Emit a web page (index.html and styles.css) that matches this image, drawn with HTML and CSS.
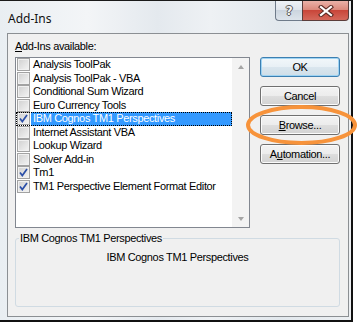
FILE: index.html
```html
<!DOCTYPE html>
<html>
<head>
<meta charset="utf-8">
<link rel="stylesheet" href="styles.css">
</head>
<body>
<div class="window">
  <div class="titlebar">
    <span class="title">Add-Ins</span>
    <div class="caption-buttons">
      <div class="cap help">?</div>
      <div class="cap close">
        <svg width="16" height="12" viewBox="0 0 16 12"><path d="M3 2 L13 10 M13 2 L3 10" stroke="#5a2a24" stroke-width="4.2" stroke-linecap="square"/><path d="M3 2 L13 10 M13 2 L3 10" stroke="#ffffff" stroke-width="2.2" stroke-linecap="square"/></svg>
      </div>
    </div>
  </div>
  <div class="client">
    <div class="label"><u>A</u>dd-Ins available:</div>
    <div class="listbox">
      <ul class="items">
        <li class="item"><span class="cb"></span><span class="txt">Analysis ToolPak</span></li>
        <li class="item"><span class="cb"></span><span class="txt">Analysis ToolPak - VBA</span></li>
        <li class="item"><span class="cb"></span><span class="txt">Conditional Sum Wizard</span></li>
        <li class="item"><span class="cb"></span><span class="txt">Euro Currency Tools</span></li>
        <li class="item selected"><span class="cb checked"><svg width="11" height="11" viewBox="0 0 11 11"><path d="M2 5.5 L4.3 8.5 L9 2" stroke="#2b4fa8" stroke-width="1.7" fill="none"/></svg></span><span class="txt">IBM Cognos TM1 Perspectives</span></li>
        <li class="item"><span class="cb"></span><span class="txt">Internet Assistant VBA</span></li>
        <li class="item"><span class="cb"></span><span class="txt">Lookup Wizard</span></li>
        <li class="item"><span class="cb"></span><span class="txt">Solver Add-in</span></li>
        <li class="item"><span class="cb checked"><svg width="11" height="11" viewBox="0 0 11 11"><path d="M2 5.5 L4.3 8.5 L9 2" stroke="#2b4fa8" stroke-width="1.7" fill="none"/></svg></span><span class="txt">Tm1</span></li>
        <li class="item"><span class="cb checked"><svg width="11" height="11" viewBox="0 0 11 11"><path d="M2 5.5 L4.3 8.5 L9 2" stroke="#2b4fa8" stroke-width="1.7" fill="none"/></svg></span><span class="txt">TM1 Perspective Element Format Editor</span></li>
      </ul>
      <div class="scrollbar">
        <span class="arrowbox"><span class="arrow up"></span></span>
        <span class="arrowbox"><span class="arrow down"></span></span>
      </div>
    </div>
    <div class="buttons">
      <div class="btn default">OK</div>
      <div class="btn">Cancel</div>
      <div class="btn"><u>B</u>rowse...</div>
      <div class="btn">A<u>u</u>tomation...</div>
    </div>
    <fieldset class="group">
      <legend>IBM Cognos TM1 Perspectives</legend>
      <p class="desc">IBM Cognos TM1 Perspectives</p>
    </fieldset>
  </div>
</div>
<svg class="mark" width="121" height="50" viewBox="0 0 121 50"><ellipse cx="61.5" cy="25" rx="53.5" ry="18" fill="none" stroke="#f7933b" stroke-width="4"/></svg>
</body>
</html>
```
FILE: styles.css
```css
html, body {
  margin: 0;
  padding: 0;
  background: #ffffff;
}
body {
  font-family: "Liberation Sans", Arial, sans-serif;
  font-size: 11px;
  letter-spacing: -0.35px;
  color: #000;
  position: relative;
  width: 361px;
  height: 330px;
  overflow: hidden;
}
.window {
  box-sizing: border-box;
  width: 353px;
  height: 322px;
  border-top: 1px solid #1a1a1a;
  border-right: 2px solid #111;
  border-bottom: 2px solid #111;
  background: linear-gradient(90deg, #e9eef2 0%, #f3f5f7 25%, #e4e9ee 45%, #eef1f4 60%, #e2e8ed 80%, #eceff2 100%);
}
.titlebar {
  height: 32px;
  display: flex;
  justify-content: space-between;
  align-items: flex-start;
}
.title {
  font-family: "Noto Sans", "Open Sans", sans-serif;
  font-size: 12px;
  letter-spacing: 0;
  line-height: 16px;
  padding: 10px 0 0 8px;
  color: #111;
}
.caption-buttons {
  display: flex;
  margin-right: 2px;
}
.cap {
  box-sizing: border-box;
  height: 20px;
  display: flex;
  align-items: center;
  justify-content: center;
}
.help {
  width: 27px;
  border: 1px solid #6f7b8a;
  border-top: none;
  border-right: none;
  border-radius: 0 0 0 4px;
  background: linear-gradient(#eef2f6 0%, #dfe5ec 45%, #ccd5df 50%, #dde4eb 100%);
  font-family: "DejaVu Sans", sans-serif;
  font-weight: bold;
  font-size: 12px;
  color: #f4f4f4;
  text-shadow: -1px 0 #555, 1px 0 #555, 0 -1px #555, 0 1px #555;
}
.close {
  width: 47px;
  border: 1px solid #5b3d3b;
  border-top: none;
  border-radius: 0 0 4px 0;
  background: linear-gradient(#eab1a8 0%, #dc8a7d 45%, #c9463a 50%, #d4685b 100%);
}
.client {
  box-sizing: border-box;
  margin-left: 7px;
  width: 342px;
  height: 284px;
  border: 1px solid #8b8f93;
  background: #f0f0f0;
  display: grid;
  grid-template-columns: 235px 80px;
  grid-template-rows: 13px 171px auto;
  column-gap: 10px;
  row-gap: 4px;
  padding: 6px 8px 0 7px;
}
.label {
  line-height: 13px;
  grid-column: 1;
}
.listbox {
  grid-column: 1;
  grid-row: 2;
  box-sizing: border-box;
  border: 1px solid #828790;
  background: #fff;
  display: flex;
}
.items {
  list-style: none;
  margin: 0;
  padding: 0;
  flex: 1;
}
.item {
  height: 13.5px;
  display: flex;
  align-items: center;
}
.cb {
  box-sizing: border-box;
  width: 13px;
  height: 13px;
  margin-left: 1px;
  border: 1px solid #a2a2a2;
  background: linear-gradient(135deg, #cfcfcf 0%, #e2e2e2 50%, #f4f4f4 100%);
  box-shadow: inset 0 0 0 1px #f0f0f0;
  display: flex;
  align-items: center;
  justify-content: center;
  flex: none;
}
.txt {
  flex: 1;
  margin-left: 1px;
  padding-left: 2px;
  height: 13.5px;
  line-height: 13.5px;
  white-space: nowrap;
}
.selected {
  outline: 1px dotted #000;
  outline-offset: -1px;
}
.selected .txt {
  background: #3399ff;
  color: #fff;
}
.scrollbar {
  width: 17px;
  background: #f3f3f3;
  display: flex;
  flex-direction: column;
  justify-content: space-between;
}
.arrowbox {
  height: 17px;
  display: flex;
  align-items: center;
  justify-content: center;
}
.arrow {
  width: 0;
  height: 0;
  border-left: 3.5px solid transparent;
  border-right: 3.5px solid transparent;
}
.arrow.up {
  border-bottom: 4px solid #a5a5a5;
}
.arrow.down {
  border-top: 4px solid #a5a5a5;
}
.buttons {
  grid-column: 2;
  grid-row: 2;
  display: flex;
  flex-direction: column;
  gap: 9px;
}
.btn {
  box-sizing: border-box;
  height: 20px;
  border: 1px solid #707070;
  border-radius: 3px;
  background: linear-gradient(#f3f3f3 0%, #ececec 50%, #dedede 50%, #d2d2d2 100%);
  box-shadow: inset 0 0 0 1px #fbfbfb;
  text-align: center;
  line-height: 18px;
  white-space: nowrap;
}
.btn.default {
  border-color: #3c7fb1;
  background: linear-gradient(#f2f7fa 0%, #e8f0f5 50%, #dae6ee 50%, #cfdee8 100%);
  box-shadow: inset 0 0 0 1px #9ed3f3;
}
.group {
  grid-column: 1 / span 2;
  grid-row: 3;
  box-sizing: border-box;
  margin: 0;
  padding: 0 4px;
  height: 75px;
  min-width: 0;
  border: 1px solid #d0dbe3;
  border-radius: 3px;
}
.group legend {
  padding: 0 1px;
  margin-left: -1px;
  line-height: 13px;
}
.desc {
  margin: 6px 0 0 0;
  line-height: 13px;
  text-align: center;
}
.mark {
  position: absolute;
  left: 240px;
  top: 100px;
}
```
